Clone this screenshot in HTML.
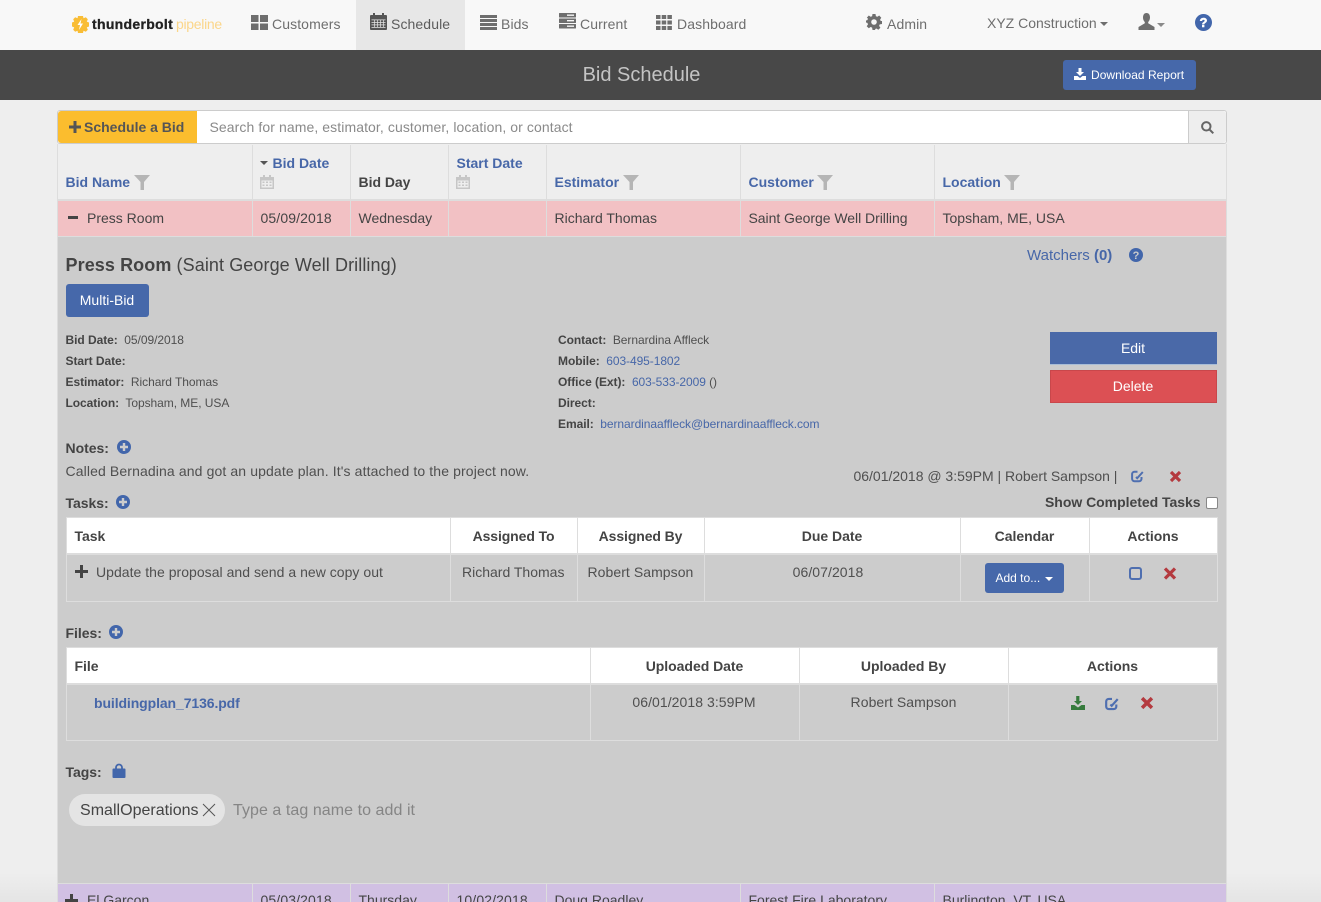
<!DOCTYPE html>
<html><head><meta charset="utf-8"><title>Bid Schedule</title>
<style>
html{margin:0;padding:0;width:1321px;height:902px;overflow:hidden}
body{margin:0;padding:0;width:1321px;height:902px;overflow:hidden;position:relative;background:#eee;font-family:"Liberation Sans",Arial,sans-serif;font-size:14px;color:#444}
.t{position:absolute;white-space:nowrap;line-height:20px}
.b{position:absolute}
.n{color:#6e6e6e;font-size:14px;letter-spacing:.1px}
.l{color:#4767a8;font-weight:bold}
.h{font-weight:bold;color:#444;letter-spacing:-.03px}
.s{font-size:12px;color:#4f4f4f;letter-spacing:-.05px}
.s b{color:#444}
.s a{color:#4767a8;letter-spacing:-.07px}
svg{position:absolute;overflow:visible}
.v{position:absolute;width:1px;background:#ddd}
</style></head><body>

<!-- nav -->
<div class="b" style="left:0;top:0;width:1321px;height:50px;background:#f8f8f8"></div>
<div class="b" style="left:356px;top:0;width:109px;height:50px;background:#e7e7e7"></div>
<svg style="left:71px;top:15px" width="19" height="19" viewBox="0 0 19 19"><path fill="#f9bd35" d="M7 1h5l.5 2.300 2.300-1 2 2-1 2.300 2.200.9v4l-2.200.9 1 2.300-2 2-2.300-1L12 18H7l-.5-2.300-2.300 1-2-2 1-2.300L1 11.500v-4l2.200-.9-1-2.300 2-2 2.300 1z"/><path fill="#fff" d="M10.500 4 6.500 10h2.500l-1 5 4-6.500H9.500z"/></svg>
<div class="t" style="left:92px;top:14px;font-weight:bold;font-size:14px;color:#222;letter-spacing:.3px;-webkit-text-stroke:.3px #222">thunderbolt</div>
<div class="t" style="left:176px;top:14px;font-size:14px;color:#fbd68a;letter-spacing:-.3px">pipeline</div>

<svg style="left:251px;top:15px" width="17" height="15" viewBox="0 0 17 15" fill="#6e6e6e"><rect width="7.500" height="7"/><rect x="9" width="8" height="7"/><rect y="8.500" width="7.500" height="6.500"/><rect x="9" y="8.500" width="8" height="6.500"/></svg>
<div class="t n" style="left:272px;top:14px">Customers</div>

<svg style="left:370px;top:13px" width="17" height="17" viewBox="0 0 17 17" fill="#555"><rect x="3" width="2" height="3"/><rect x="12" width="2" height="3"/><rect y="2" width="17" height="15" rx="1"/><path fill="#e7e7e7" d="M1.500 6.500h14v.7h-14zM1.500 9h14v.7h-14zM1.500 11.500h14v.7h-14zM1.500 14h14v.7h-14zM4 6.500h.7v8.200H4zM7 6.500h.7v8.200H7zM10 6.500h.7v8.200H10zM13 6.500h.7v8.200H13z"/></svg>
<div class="t n" style="left:391px;top:14px;color:#5c5c5c">Schedule</div>

<svg style="left:480px;top:15px" width="17" height="15" viewBox="0 0 17 15" fill="#6e6e6e"><rect width="17" height="3"/><rect y="4" width="17" height="3"/><rect y="8" width="17" height="3"/><rect y="12" width="17" height="3"/></svg>
<div class="t n" style="left:501px;top:14px">Bids</div>

<svg style="left:559px;top:13px" width="17" height="16" viewBox="0 0 17 16" fill="#6e6e6e"><rect width="17" height="4.500" rx=".5"/><rect y="5.500" width="17" height="4.500" rx=".5"/><rect y="11" width="17" height="4.500" rx=".5"/><path fill="#f8f8f8" d="M8 7h7v1.400H8zM8 12.500h7v1.400H8zM8 1.500h7v1.400H8z"/></svg>
<div class="t n" style="left:580px;top:14px">Current</div>

<svg style="left:656px;top:15px" width="16" height="15" viewBox="0 0 16 15" fill="#6e6e6e"><rect width="4.500" height="4"/><rect x="5.700" width="4.500" height="4"/><rect x="11.400" width="4.500" height="4"/><rect y="5.500" width="4.500" height="4"/><rect x="5.700" y="5.500" width="4.500" height="4"/><rect x="11.400" y="5.500" width="4.500" height="4"/><rect y="11" width="4.500" height="4"/><rect x="5.700" y="11" width="4.500" height="4"/><rect x="11.400" y="11" width="4.500" height="4"/></svg>
<div class="t n" style="left:677px;top:14px">Dashboard</div>

<svg style="left:866px;top:14px" width="16" height="16" viewBox="0 0 16 16"><path fill="#6e6e6e" fill-rule="evenodd" d="M6.500 0h3l.4 2.200 1.500.6L13.200 1.500l2.100 2.200-1.200 1.800.6 1.500L16 7v3l-2.300.4-.6 1.500 1.300 1.800-2.100 2.100-1.900-1.300-1.500.6L9.500 16h-3l-.4-2.400-1.500-.6-1.800 1.300L.7 12.200 2 10.400l-.6-1.500L0 8.500v-2l1.400-.4.600-1.500L.8 3.700l2-2.200L4.600 2.800l1.500-.6zM8 5.200a2.800 2.800 0 1 0 0 5.600 2.800 2.800 0 0 0 0-5.600z"/></svg>
<div class="t n" style="left:887px;top:14px">Admin</div>

<div class="t n" style="left:987px;top:13px;letter-spacing:0">XYZ Construction</div>
<div class="b" style="left:1100px;top:22px;border:4px solid transparent;border-top-color:#6e6e6e;border-bottom:0"></div>
<svg style="left:1138px;top:13px" width="17" height="17" viewBox="0 0 17 17"><path fill="#6e6e6e" d="M8.500 0C6 0 5 2 5 4.500c0 2 .9 3.700 1.800 4.500v1.300L.5 14v3h16v-3l-6.300-3.700V9c.9-.8 1.800-2.500 1.800-4.500C12 2 11 0 8.500 0z"/></svg>
<div class="b" style="left:1157px;top:23px;border:4px solid transparent;border-top-color:#8a8a8a;border-bottom:0"></div>
<svg style="left:1195px;top:14px" width="17" height="17" viewBox="0 0 17 17"><circle cx="8.500" cy="8.500" r="8.500" fill="#4266ab"/><text x="8.500" y="13" font-family="Liberation Sans" font-weight="bold" font-size="13" fill="#fff" stroke="#fff" stroke-width=".5" text-anchor="middle">?</text></svg>

<!-- title bar -->
<div class="b" style="left:0;top:50px;width:1321px;height:50px;background:#484848"></div>
<div class="t" style="left:0;top:63px;width:1283px;text-align:center;font-size:20px;line-height:24px;color:#c4c4c4">Bid Schedule</div>
<div class="b" style="left:1063px;top:60px;width:133px;height:30px;background:#4668aa;border-radius:3px"></div>
<svg style="left:1074px;top:68px" width="12" height="12" viewBox="0 0 12 12" fill="#fff"><path d="M4.500 0h3v4H10L6 8 2 4h2.500z"/><path d="M0 8h3.500L6 10l2.500-2H12v4H0z"/></svg>
<div class="t" style="left:1091px;top:65px;font-size:12px;color:#fff;letter-spacing:.03px">Download Report</div>

<!-- search -->
<div class="b" style="left:57px;top:110px;width:1168px;height:32px;background:#fff;border:1px solid #ccc;border-radius:3px"></div>
<div class="b" style="left:58px;top:111px;width:139px;height:32px;background:#fbbd2e;border-radius:3px 0 0 3px"></div>
<svg style="left:69px;top:121px" width="12" height="12" viewBox="0 0 12 12" fill="#555"><path d="M4.500 0h3v4.500H12v3H7.500V12h-3V7.500H0v-3h4.500z"/></svg>
<div class="t" style="left:84px;top:117px;font-weight:bold;color:#555">Schedule a Bid</div>
<div class="t" style="left:209.500px;top:117px;color:#8a8a8a;letter-spacing:.09px">Search for name, estimator, customer, location, or contact</div>
<div class="b" style="left:1188px;top:111px;width:38px;height:32px;background:#eee;border-left:1px solid #ccc;box-sizing:border-box;border-radius:0 3px 3px 0"></div>
<svg style="left:1201px;top:121px" width="13" height="13" viewBox="0 0 13 13" fill="none" stroke="#666" stroke-width="2"><circle cx="5.300" cy="5.300" r="4.200"/><path d="M8.500 8.500l3.800 3.800"/></svg>

<!-- table -->
<div class="b" style="left:57px;top:144px;width:1170px;height:758px;background:#eee;border-left:1px solid #ddd;border-right:1px solid #ddd;box-sizing:border-box"></div>
<div class="b" style="left:58px;top:199px;width:1168px;height:2px;background:#ddd"></div>
<div class="b" style="left:58px;top:201px;width:1168px;height:36px;background:#f2c1c4"></div>
<div class="b" style="left:58px;top:236px;width:1168px;height:1px;background:#ddd"></div>
<div class="v" style="left:252px;top:145px;height:91px"></div>
<div class="v" style="left:350px;top:145px;height:91px"></div>
<div class="v" style="left:448px;top:145px;height:91px"></div>
<div class="v" style="left:546px;top:145px;height:91px"></div>
<div class="v" style="left:740px;top:145px;height:91px"></div>
<div class="v" style="left:934px;top:145px;height:91px"></div>

<div class="t l" style="left:65.500px;top:172px">Bid Name</div>
<svg style="left:134px;top:175px" width="16" height="15" viewBox="0 0 16 15" fill="#b5b5b5"><path d="M0 0h16L10 7v8H6.500V7z"/></svg>
<div class="b" style="left:260px;top:161px;border:4.500px solid transparent;border-top:4.500px solid #555;border-bottom:0"></div>
<div class="t l" style="left:272.500px;top:153px">Bid Date</div>
<svg style="left:260px;top:175px" width="14" height="14" viewBox="0 0 14 14" fill="#c6c6c6"><rect x="3" width="2" height="3"/><rect x="9" width="2" height="3"/><path fill-rule="evenodd" d="M0 2h14v12H0zM1.500 5.500v7h11v-7z"/><path d="M2.500 6.500h2v1.500h-2zM6 6.500h2v1.500H6zM9.500 6.500h2v1.500h-2zM2.500 9.500h2V11h-2zM6 9.500h2V11H6zM9.500 9.500h2V11h-2z"/></svg>
<div class="t h" style="left:358.500px;top:172px">Bid Day</div>
<div class="t l" style="left:456.500px;top:153px">Start Date</div>
<svg style="left:456px;top:175px" width="14" height="14" viewBox="0 0 14 14" fill="#c6c6c6"><rect x="3" width="2" height="3"/><rect x="9" width="2" height="3"/><path fill-rule="evenodd" d="M0 2h14v12H0zM1.500 5.500v7h11v-7z"/><path d="M2.500 6.500h2v1.500h-2zM6 6.500h2v1.500H6zM9.500 6.500h2v1.500h-2zM2.500 9.500h2V11h-2zM6 9.500h2V11H6zM9.500 9.500h2V11h-2z"/></svg>
<div class="t l" style="left:554.500px;top:172px">Estimator</div>
<svg style="left:623px;top:175px" width="16" height="15" viewBox="0 0 16 15" fill="#b5b5b5"><path d="M0 0h16L10 7v8H6.500V7z"/></svg>
<div class="t l" style="left:748.500px;top:172px">Customer</div>
<svg style="left:817px;top:175px" width="16" height="15" viewBox="0 0 16 15" fill="#b5b5b5"><path d="M0 0h16L10 7v8H6.500V7z"/></svg>
<div class="t l" style="left:942.500px;top:172px">Location</div>
<svg style="left:1004px;top:175px" width="16" height="15" viewBox="0 0 16 15" fill="#b5b5b5"><path d="M0 0h16L10 7v8H6.500V7z"/></svg>

<div class="b" style="left:68px;top:216px;width:10px;height:3px;background:#444"></div>
<div class="t" style="left:87px;top:208px">Press Room</div>
<div class="t" style="left:260.500px;top:208px;letter-spacing:.12px">05/09/2018</div>
<div class="t" style="left:358.500px;top:208px">Wednesday</div>
<div class="t" style="left:554.500px;top:208px">Richard Thomas</div>
<div class="t" style="left:748.500px;top:208px;letter-spacing:-.04px">Saint George Well Drilling</div>
<div class="t" style="left:942.500px;top:208px">Topsham, ME, USA</div>

<!-- detail panel -->
<div class="b" style="left:58px;top:237px;width:1168px;height:646px;background:#ccc"></div>
<div class="t" style="left:65.500px;top:254px;font-size:18px;line-height:22px;color:#444;letter-spacing:.09px"><b>Press Room</b> (Saint George Well Drilling)</div>
<div class="t" style="left:1027px;top:246px;font-size:15px;color:#4767a8">Watchers <b>(0)</b></div>
<svg style="left:1129px;top:248px" width="14" height="14" viewBox="0 0 14 14"><circle cx="7" cy="7" r="7" fill="#4266ab"/><text x="7" y="11" font-family="Liberation Sans" font-weight="bold" font-size="11" fill="#ccc" text-anchor="middle">?</text></svg>
<div class="b" style="left:66px;top:284px;width:83px;height:33px;background:#4668aa;border-radius:3px"></div>
<div class="t" style="left:65.500px;top:290px;width:83px;text-align:center;color:#fff">Multi-Bid</div>

<div class="t s" style="left:65.500px;top:330px"><b>Bid Date:</b>&nbsp; 05/09/2018</div>
<div class="t s" style="left:65.500px;top:351px"><b>Start Date:</b></div>
<div class="t s" style="left:65.500px;top:372px"><b>Estimator:</b>&nbsp; Richard Thomas</div>
<div class="t s" style="left:65.500px;top:393px"><b>Location:</b>&nbsp; Topsham, ME, USA</div>

<div class="t s" style="left:558px;top:330px"><b>Contact:</b>&nbsp; Bernardina Affleck</div>
<div class="t s" style="left:558px;top:351px"><b>Mobile:</b>&nbsp; <a>603-495-1802</a></div>
<div class="t s" style="left:558px;top:372px"><b>Office (Ext):</b>&nbsp; <a>603-533-2009</a> ()</div>
<div class="t s" style="left:558px;top:393px"><b>Direct:</b></div>
<div class="t s" style="left:558px;top:414px"><b>Email:</b>&nbsp; <a>bernardinaaffleck@bernardinaaffleck.com</a></div>

<div class="b" style="left:1050px;top:332px;width:167px;height:33px;background:#4a69a8;border:1px solid #a9bdd6;border-top:0;border-left:0;border-right:0;box-sizing:border-box"></div>
<div class="t" style="left:1049.500px;top:338px;width:167px;text-align:center;color:#fff">Edit</div>
<div class="b" style="left:1050px;top:370px;width:167px;height:33px;background:#dc5054;border:1px solid #c9474b;box-sizing:border-box"></div>
<div class="t" style="left:1049.500px;top:376px;width:167px;text-align:center;color:#fff">Delete</div>

<div class="t h" style="left:65.500px;top:438px">Notes:</div>
<svg style="left:117px;top:440px" width="14" height="14" viewBox="0 0 14 14"><circle cx="7" cy="7" r="7" fill="#4266ab"/><path fill="#ccc" d="M5.800 3h2.400v2.800H11v2.400H8.200V11H5.800V8.200H3V5.800h2.800z"/></svg>
<div class="t" style="left:65.500px;top:461px;letter-spacing:.12px;color:#4f4f4f">Called Bernadina and got an update plan. It's attached to the project now.</div>
<div class="t" style="left:853.500px;top:466px;color:#4f4f4f;letter-spacing:-.01px">06/01/2018 @ 3:59PM | Robert Sampson |</div>
<svg style="left:1131px;top:470px" width="13" height="13" viewBox="0 0 13 13" fill="none" stroke="#4f6fb0" stroke-width="2"><path d="M6.500 1.800H3.500a2.400 2.400 0 0 0-2.400 2.400v4.600a2.400 2.400 0 0 0 2.400 2.400h4.600a2.400 2.400 0 0 0 2.400-2.400V7"/><path d="M5 7l1.200 1.200L11.800 2"/></svg>
<svg style="left:1170px;top:471px" width="11" height="11" viewBox="0 0 11 11" stroke="#b43a3f" stroke-width="3.200"><path d="M1 1l9 9M10 1l-9 9"/></svg>

<div class="t h" style="left:65.500px;top:493px">Tasks:</div>
<svg style="left:115.500px;top:495px" width="14" height="14" viewBox="0 0 14 14"><circle cx="7" cy="7" r="7" fill="#4266ab"/><path fill="#ccc" d="M5.800 3h2.400v2.800H11v2.400H8.200V11H5.800V8.200H3V5.800h2.800z"/></svg>
<div class="t h" style="left:1045px;top:492px">Show Completed Tasks</div>
<div class="b" style="left:1206px;top:497px;width:10px;height:10px;background:#fff;border:1px solid #888;border-radius:2px"></div>

<!-- tasks table -->
<div class="b" style="left:66px;top:517px;width:1152px;height:85px;border:1px solid #ddd;box-sizing:border-box"></div>
<div class="b" style="left:67px;top:518px;width:1150px;height:35px;background:#fff"></div>
<div class="b" style="left:67px;top:553px;width:1150px;height:2px;background:#ddd"></div>
<div class="v" style="left:450px;top:518px;height:83px"></div>
<div class="v" style="left:577px;top:518px;height:83px"></div>
<div class="v" style="left:704px;top:518px;height:83px"></div>
<div class="v" style="left:960px;top:518px;height:83px"></div>
<div class="v" style="left:1089px;top:518px;height:83px"></div>
<div class="t h" style="left:74.500px;top:526px">Task</div>
<div class="t h" style="left:450.500px;top:526px;width:126px;text-align:center;letter-spacing:-.1px">Assigned To</div>
<div class="t h" style="left:577.500px;top:526px;width:126px;text-align:center;letter-spacing:-.1px">Assigned By</div>
<div class="t h" style="left:704.500px;top:526px;width:255px;text-align:center">Due Date</div>
<div class="t h" style="left:960.500px;top:526px;width:128px;text-align:center">Calendar</div>
<div class="t h" style="left:1089.500px;top:526px;width:127px;text-align:center">Actions</div>
<svg style="left:75px;top:565px" width="13" height="13" viewBox="0 0 13 13" fill="#444"><path d="M5 0h3v5h5v3H8v5H5V8H0V5h5z"/></svg>
<div class="t" style="left:96px;top:562px;color:#4f4f4f;letter-spacing:.03px">Update the proposal and send a new copy out</div>
<div class="t" style="left:462px;top:562px;color:#4f4f4f">Richard Thomas</div>
<div class="t" style="left:587.500px;top:562px;color:#4f4f4f;letter-spacing:.06px">Robert Sampson</div>
<div class="t" style="left:705px;top:562px;width:246px;text-align:center;color:#4f4f4f;letter-spacing:.06px">06/07/2018</div>
<div class="b" style="left:985px;top:563px;width:79px;height:30px;background:#4668aa;border-radius:3px"></div>
<div class="t" style="left:995.500px;top:568px;font-size:12px;color:#fff">Add to...</div>
<div class="b" style="left:1045px;top:577px;border:4px solid transparent;border-top-color:#fff;border-bottom:0"></div>
<div class="b" style="left:1129px;top:567px;width:9px;height:9px;border:2px solid #4f6fb0;border-radius:3px"></div>
<svg style="left:1164px;top:568px" width="12" height="11" viewBox="0 0 12 11" stroke="#b43a3f" stroke-width="3.200"><path d="M1 .5l10 10M11 .5l-10 10"/></svg>

<div class="t h" style="left:65.500px;top:623px">Files:</div>
<svg style="left:108.500px;top:625px" width="14" height="14" viewBox="0 0 14 14"><circle cx="7" cy="7" r="7" fill="#4266ab"/><path fill="#ccc" d="M5.800 3h2.400v2.800H11v2.400H8.200V11H5.800V8.200H3V5.800h2.800z"/></svg>

<!-- files table -->
<div class="b" style="left:66px;top:647px;width:1152px;height:94px;border:1px solid #ddd;box-sizing:border-box"></div>
<div class="b" style="left:67px;top:648px;width:1150px;height:35px;background:#fff"></div>
<div class="b" style="left:67px;top:683px;width:1150px;height:2px;background:#ddd"></div>
<div class="v" style="left:590px;top:648px;height:92px"></div>
<div class="v" style="left:799px;top:648px;height:92px"></div>
<div class="v" style="left:1008px;top:648px;height:92px"></div>
<div class="t h" style="left:74.500px;top:656px">File</div>
<div class="t h" style="left:590.500px;top:656px;width:208px;text-align:center">Uploaded Date</div>
<div class="t h" style="left:799.500px;top:656px;width:208px;text-align:center">Uploaded By</div>
<div class="t h" style="left:1008.500px;top:656px;width:208px;text-align:center">Actions</div>
<div class="t l" style="left:94px;top:693px;letter-spacing:-.1px">buildingplan_7136.pdf</div>
<div class="t" style="left:590px;top:692px;width:208px;text-align:center;color:#4f4f4f;letter-spacing:.06px">06/01/2018 3:59PM</div>
<div class="t" style="left:799.500px;top:692px;width:208px;text-align:center;color:#4f4f4f;letter-spacing:.06px">Robert Sampson</div>
<svg style="left:1071px;top:696px" width="14" height="14" viewBox="0 0 14 14" fill="#357a3c"><path d="M5.200 0h3.200v5H11L7 9 3 5h2.200z"/><path d="M0 9h3.500L7 11.500 10.500 9H14v5H0z"/></svg>
<svg style="left:1105px;top:697px" width="14" height="14" viewBox="0 0 13 13" fill="none" stroke="#4f6fb0" stroke-width="2"><path d="M6.500 1.800H3.500a2.400 2.400 0 0 0-2.400 2.400v4.600a2.400 2.400 0 0 0 2.400 2.400h4.600a2.400 2.400 0 0 0 2.400-2.400V7"/><path d="M5 7l1.200 1.200L11.800 2"/></svg>
<svg style="left:1141px;top:697px" width="12" height="12" viewBox="0 0 11 11" stroke="#b43a3f" stroke-width="3.200"><path d="M1 1l9 9M10 1l-9 9"/></svg>

<div class="t h" style="left:65.500px;top:762px">Tags:</div>
<svg style="left:112px;top:764px" width="14" height="14" viewBox="0 0 14 14"><path fill="#4266ab" d="M1.500 4.500H12.500a1 1 0 0 1 1 1v7.500a1 1 0 0 1-1 1H1.500a1 1 0 0 1-1-1V5.500a1 1 0 0 1 1-1z"/><path fill="none" stroke="#4266ab" stroke-width="1.800" d="M4 5.500V3.500a3 3 0 0 1 6 0v2"/></svg>

<div class="b" style="left:69px;top:794px;width:156px;height:32px;background:#e4e4e4;border-radius:16px"></div>
<div class="t" style="left:80px;top:801px;font-size:16px;color:#444;letter-spacing:.02px">SmallOperations</div>
<svg style="left:203px;top:804px" width="12" height="12" viewBox="0 0 12 12" stroke="#555" stroke-width="1" fill="none"><path d="M0 0l12 12M12 0L0 12"/></svg>
<div class="t" style="left:233px;top:801px;font-size:16px;color:#858585;letter-spacing:.06px">Type a tag name to add it</div>

<!-- next row -->
<div class="b" style="left:58px;top:883px;width:1168px;height:19px;background:#d1c0e3;border-top:1px solid #ddd;box-sizing:border-box"></div>
<div class="v" style="left:252px;top:884px;height:18px"></div>
<div class="v" style="left:350px;top:884px;height:18px"></div>
<div class="v" style="left:448px;top:884px;height:18px"></div>
<div class="v" style="left:546px;top:884px;height:18px"></div>
<div class="v" style="left:740px;top:884px;height:18px"></div>
<div class="v" style="left:934px;top:884px;height:18px"></div>
<svg style="left:65px;top:894px" width="13" height="13" viewBox="0 0 13 13" fill="#444"><path d="M5 0h3v5h5v3H8v5H5V8H0V5h5z"/></svg>
<div class="t" style="left:87px;top:890px">El Garcon</div>
<div class="t" style="left:260.500px;top:890px;letter-spacing:.12px">05/03/2018</div>
<div class="t" style="left:358.500px;top:890px">Thursday</div>
<div class="t" style="left:456.500px;top:890px;letter-spacing:.12px">10/02/2018</div>
<div class="t" style="left:554.500px;top:890px">Doug Roadley</div>
<div class="t" style="left:748.500px;top:890px">Forest Fire Laboratory</div>
<div class="t" style="left:942.500px;top:890px">Burlington, VT, USA</div>

<!-- bottom fade on page margins -->
<div class="b" style="left:0;top:872px;width:57px;height:30px;background:linear-gradient(to bottom,rgba(0,0,0,0),rgba(0,0,0,.04))"></div>
<div class="b" style="left:1227px;top:872px;width:94px;height:30px;background:linear-gradient(to bottom,rgba(0,0,0,0),rgba(0,0,0,.04))"></div>

</body></html>
